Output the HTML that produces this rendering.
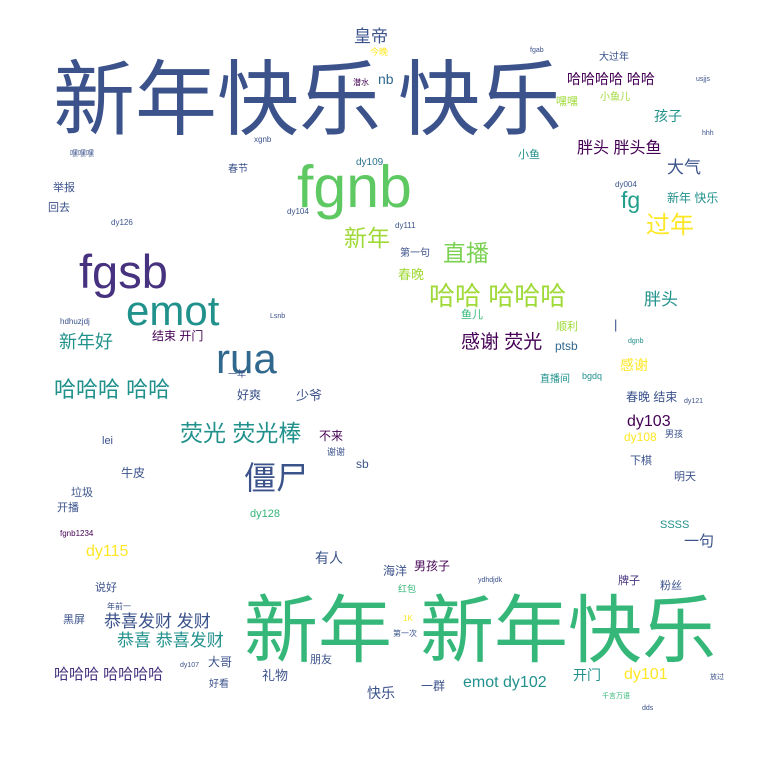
<!DOCTYPE html>
<html><head><meta charset="utf-8"><style>
body{margin:0;width:768px;height:768px;background:#fff;overflow:hidden;position:relative;font-family:"Liberation Sans","Noto Sans CJK SC",sans-serif}
span{position:absolute;line-height:1;white-space:nowrap}
.a{color:#3b528b}.b{color:#5ec962}.c{color:#35b779}.d{color:#fde725}.e{color:#21918c}.f{color:#440154}.g{color:#46327e}.h{color:#31688e}.i{color:#a0da39}.j{color:#1f9e89}.k{color:#2c728e}.l{color:#7ad151}
</style></head><body>
<span class="a" style="left:53px;top:60px;font-size:82px">新年快乐</span>
<span class="a" style="left:398px;top:60px;font-size:82px">快乐</span>
<span class="c" style="left:244px;top:594px;font-size:74px">新年</span>
<span class="c" style="left:420px;top:594px;font-size:74px">新年快乐</span>
<span class="b" style="left:297px;top:158px;font-size:59px">fgnb</span>
<span class="g" style="left:79px;top:248px;font-size:47px">fgsb</span>
<span class="e" style="left:126px;top:290px;font-size:42px">emot</span>
<span class="h" style="left:216px;top:338px;font-size:42px">rua</span>
<span class="a" style="left:244px;top:462px;font-size:32px">僵尸</span>
<span class="i" style="left:429px;top:283px;font-size:26px">哈哈 哈哈哈</span>
<span class="l" style="left:443px;top:242px;font-size:23px">直播</span>
<span class="d" style="left:646px;top:214px;font-size:24px">过年</span>
<span class="j" style="left:621px;top:189px;font-size:23px">fg</span>
<span class="i" style="left:344px;top:227px;font-size:23px">新年</span>
<span class="a" style="left:667px;top:159px;font-size:17px">大气</span>
<span class="f" style="left:577px;top:141px;font-size:16px">胖头 胖头鱼</span>
<span class="e" style="left:654px;top:109px;font-size:14px">孩子</span>
<span class="a" style="left:354px;top:28px;font-size:17px">皇帝</span>
<span class="f" style="left:567px;top:72px;font-size:14px">哈哈哈哈 哈哈</span>
<span class="h" style="left:378px;top:72px;font-size:14px">nb</span>
<span class="e" style="left:180px;top:422px;font-size:23px">荧光 荧光棒</span>
<span class="f" style="left:461px;top:333px;font-size:19px">感谢 荧光</span>
<span class="e" style="left:54px;top:379px;font-size:22px">哈哈哈 哈哈</span>
<span class="e" style="left:59px;top:333px;font-size:18px">新年好</span>
<span class="e" style="left:644px;top:291px;font-size:17px">胖头</span>
<span class="f" style="left:152px;top:330px;font-size:12px">结束 开门</span>
<span class="a" style="left:104px;top:613px;font-size:17px">恭喜发财 发财</span>
<span class="e" style="left:117px;top:632px;font-size:17px">恭喜 恭喜发财</span>
<span class="g" style="left:54px;top:667px;font-size:15px">哈哈哈 哈哈哈哈</span>
<span class="e" style="left:463px;top:675px;font-size:16px">emot dy102</span>
<span class="d" style="left:86px;top:544px;font-size:16px">dy115</span>
<span class="d" style="left:624px;top:667px;font-size:16px">dy101</span>
<span class="f" style="left:627px;top:414px;font-size:16px">dy103</span>
<span class="a" style="left:684px;top:534px;font-size:15px">一句</span>
<span class="a" style="left:367px;top:686px;font-size:14px">快乐</span>
<span class="e" style="left:573px;top:668px;font-size:14px">开门</span>
<span class="a" style="left:262px;top:669px;font-size:13px">礼物</span>
<span class="a" style="left:315px;top:551px;font-size:14px">有人</span>
<span class="a" style="left:208px;top:656px;font-size:12px">大哥</span>
<span class="d" style="left:620px;top:358px;font-size:14px">感谢</span>
<span class="i" style="left:398px;top:268px;font-size:13px">春晚</span>
<span class="h" style="left:555px;top:340px;font-size:12px">ptsb</span>
<span class="d" style="left:624px;top:431px;font-size:12px">dy108</span>
<span class="a" style="left:626px;top:391px;font-size:12px">春晚 结束</span>
<span class="e" style="left:667px;top:192px;font-size:12px">新年 快乐</span>
<span class="a" style="left:296px;top:389px;font-size:13px">少爷</span>
<span class="a" style="left:237px;top:389px;font-size:12px">好爽</span>
<span class="f" style="left:319px;top:430px;font-size:12px">不来</span>
<span class="a" style="left:356px;top:458px;font-size:12px">sb</span>
<span class="c" style="left:250px;top:509px;font-size:11px">dy128</span>
<span class="a" style="left:121px;top:467px;font-size:12px">牛皮</span>
<span class="a" style="left:71px;top:488px;font-size:11px">垃圾</span>
<span class="a" style="left:57px;top:503px;font-size:11px">开播</span>
<span class="a" style="left:102px;top:436px;font-size:11px">lei</span>
<span class="e" style="left:660px;top:520px;font-size:11px">SSSS</span>
<span class="a" style="left:383px;top:565px;font-size:12px">海洋</span>
<span class="f" style="left:414px;top:560px;font-size:12px">男孩子</span>
<span class="g" style="left:618px;top:576px;font-size:11px">牌子</span>
<span class="a" style="left:660px;top:581px;font-size:11px">粉丝</span>
<span class="a" style="left:63px;top:615px;font-size:11px">黑屏</span>
<span class="a" style="left:95px;top:583px;font-size:11px">说好</span>
<span class="a" style="left:421px;top:680px;font-size:12px">一群</span>
<span class="a" style="left:310px;top:655px;font-size:11px">朋友</span>
<span class="a" style="left:209px;top:680px;font-size:10px">好看</span>
<span class="a" style="left:630px;top:456px;font-size:11px">下棋</span>
<span class="a" style="left:674px;top:472px;font-size:11px">明天</span>
<span class="a" style="left:53px;top:183px;font-size:11px">举报</span>
<span class="a" style="left:48px;top:203px;font-size:11px">回去</span>
<span class="a" style="left:228px;top:165px;font-size:10px">春节</span>
<span class="k" style="left:356px;top:158px;font-size:10px">dy109</span>
<span class="e" style="left:518px;top:150px;font-size:11px">小鱼</span>
<span class="i" style="left:600px;top:93px;font-size:10px">小鱼儿</span>
<span class="a" style="left:599px;top:53px;font-size:10px">大过年</span>
<span class="i" style="left:556px;top:97px;font-size:11px">嘿嘿</span>
<span class="a" style="left:400px;top:249px;font-size:10px">第一句</span>
<span class="c" style="left:461px;top:310px;font-size:11px">鱼儿</span>
<span class="i" style="left:556px;top:322px;font-size:11px">顺利</span>
<span class="e" style="left:540px;top:375px;font-size:10px">直播间</span>
<span class="e" style="left:582px;top:372px;font-size:9px">bgdq</span>
<span class="a" style="left:614px;top:318px;font-size:13px">|</span>
<span class="a" style="left:665px;top:430px;font-size:9px">男孩</span>
<span class="a" style="left:327px;top:448px;font-size:9px">谢谢</span>
<span class="a" style="left:228px;top:370px;font-size:9px">一年</span>
<span class="d" style="left:370px;top:48px;font-size:9px">今晚</span>
<span class="f" style="left:353px;top:79px;font-size:8px">潜水</span>
<span class="a" style="left:70px;top:150px;font-size:8px">嘿嘿嘿</span>
<span class="a" style="left:107px;top:603px;font-size:8px">年前一</span>
<span class="f" style="left:60px;top:530px;font-size:8px">fgnb1234</span>
<span class="a" style="left:60px;top:318px;font-size:8px">hdhuzjdj</span>
<span class="a" style="left:270px;top:313px;font-size:7px">Lsnb</span>
<span class="a" style="left:111px;top:219px;font-size:8px">dy126</span>
<span class="a" style="left:287px;top:208px;font-size:8px">dy104</span>
<span class="a" style="left:395px;top:222px;font-size:8px">dy111</span>
<span class="a" style="left:615px;top:181px;font-size:8px">dy004</span>
<span class="a" style="left:684px;top:398px;font-size:7px">dy121</span>
<span class="a" style="left:180px;top:662px;font-size:7px">dy107</span>
<span class="a" style="left:478px;top:577px;font-size:7px">ydhdjdk</span>
<span class="a" style="left:254px;top:136px;font-size:8px">xgnb</span>
<span class="a" style="left:530px;top:47px;font-size:7px">fgab</span>
<span class="a" style="left:696px;top:76px;font-size:7px">usjjs</span>
<span class="a" style="left:702px;top:130px;font-size:7px">hhh</span>
<span class="e" style="left:628px;top:338px;font-size:7px">dgnb</span>
<span class="a" style="left:642px;top:705px;font-size:7px">dds</span>
<span class="c" style="left:602px;top:693px;font-size:7px">千言万语</span>
<span class="c" style="left:398px;top:585px;font-size:9px">红包</span>
<span class="a" style="left:393px;top:630px;font-size:8px">第一次</span>
<span class="d" style="left:403px;top:615px;font-size:8px">1K</span>
<span class="a" style="left:710px;top:674px;font-size:7px">放过</span>
</body></html>
